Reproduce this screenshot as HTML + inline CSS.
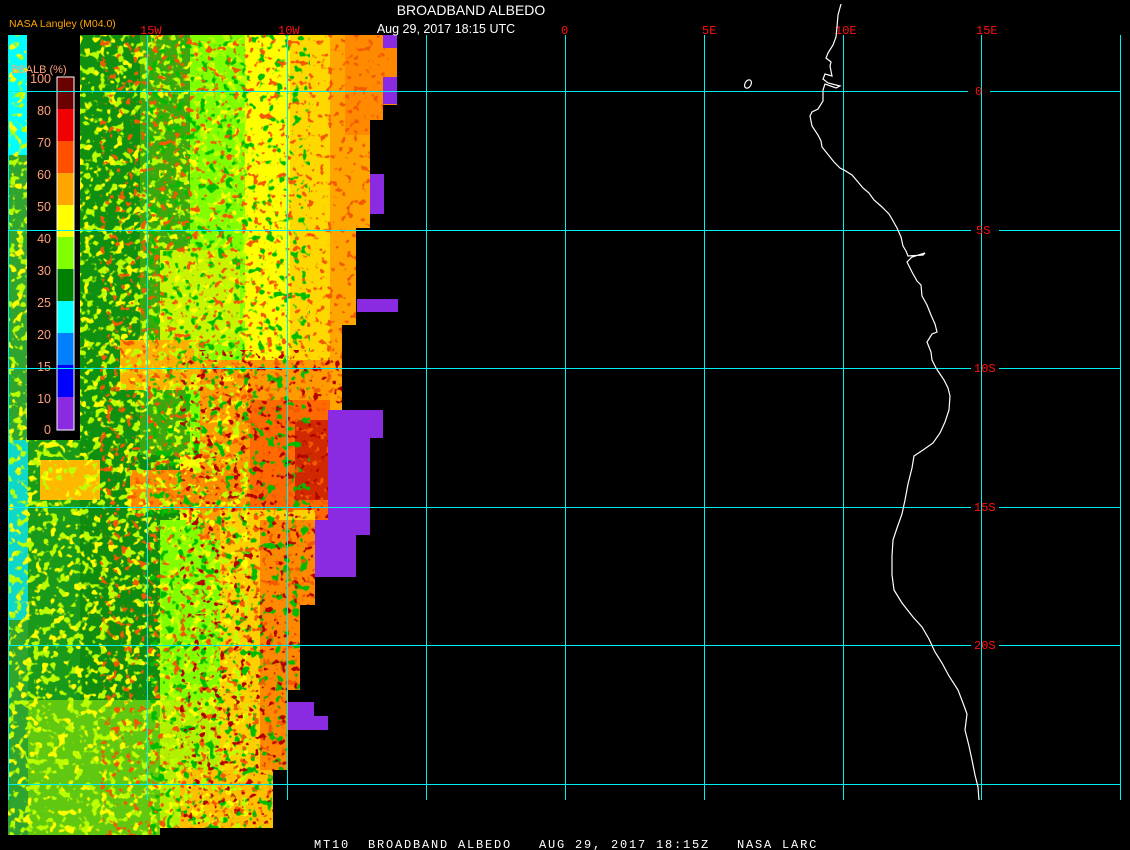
<!DOCTYPE html>
<html><head><meta charset="utf-8"><style>
html,body{margin:0;padding:0;background:#000;}
body{width:1130px;height:850px;overflow:hidden;position:relative;}
svg{position:absolute;left:0;top:0;}
</style></head><body>
<svg width="1130" height="850" viewBox="0 0 1130 850" xmlns="http://www.w3.org/2000/svg">
<defs>
<filter id="spY" x="0" y="0" width="100%" height="100%">
<feTurbulence type="fractalNoise" baseFrequency="0.12" numOctaves="2" seed="2"/>
<feColorMatrix values="0 0 0 0 1  0 0 0 0 1  0 0 0 0 0  12 0 0 0 -7.2"/>
</filter>
<filter id="spL" x="0" y="0" width="100%" height="100%">
<feTurbulence type="fractalNoise" baseFrequency="0.12" numOctaves="2" seed="5"/>
<feColorMatrix values="0 0 0 0 0.5  0 0 0 0 1  0 0 0 0 0  12 0 0 0 -7.0"/>
</filter>
<filter id="spR" x="0" y="0" width="100%" height="100%">
<feTurbulence type="fractalNoise" baseFrequency="0.15" numOctaves="2" seed="8"/>
<feColorMatrix values="0 0 0 0 0.9  0 0 0 0 0.1  0 0 0 0 0  12 0 0 0 -7.4"/>
</filter>
<filter id="spD" x="0" y="0" width="100%" height="100%">
<feTurbulence type="fractalNoise" baseFrequency="0.15" numOctaves="2" seed="11"/>
<feColorMatrix values="0 0 0 0 0.45  0 0 0 0 0  0 0 0 0 0  12 0 0 0 -7.6"/>
</filter>
<filter id="spG" x="0" y="0" width="100%" height="100%">
<feTurbulence type="fractalNoise" baseFrequency="0.12" numOctaves="2" seed="14"/>
<feColorMatrix values="0 0 0 0 0  0 0 0 0 0.5  0 0 0 0 0  12 0 0 0 -7.2"/>
</filter>
<clipPath id="img">
<polygon points="8,35 397,35 397,105 383,105 383,120 370,120 370,228 356,228 356,325 342,325 342,410 328,410 328,520 315,520 315,605 300,605 300,690 287,690 287,770 273,770 273,828 160,828 160,835 8,835"/>
</clipPath>
</defs>
<g clip-path="url(#img)">
<rect x="8" y="35" width="400" height="800" fill="#ffff00"/>
<rect x="8" y="35" width="20" height="800" fill="#2fa52f"/>
<rect x="8" y="35" width="20" height="120" fill="#00ffff"/>
<rect x="8" y="440" width="45" height="180" fill="#10d8c8"/>
<rect x="28" y="440" width="60" height="260" fill="#1a9a1a"/>
<rect x="80" y="35" width="110" height="420" fill="#109010"/>
<rect x="140" y="35" width="50" height="420" fill="#3aa80e"/>
<rect x="80" y="455" width="100" height="250" fill="#108c10"/>
<rect x="28" y="700" width="132" height="140" fill="#60c810"/>
<rect x="190" y="35" width="55" height="420" fill="#80ff00"/>
<rect x="160" y="520" width="80" height="200" fill="#80ff00"/>
<rect x="160" y="700" width="70" height="140" fill="#b0f000"/>
<rect x="245" y="35" width="45" height="400" fill="#ffff00"/>
<rect x="290" y="35" width="45" height="400" fill="#ffd800"/>
<rect x="330" y="35" width="70" height="420" fill="#ffa500"/>
<rect x="345" y="35" width="55" height="100" fill="#ff8a00"/>
<rect x="200" y="360" width="130" height="180" fill="#ff9a00"/>
<rect x="250" y="400" width="80" height="120" fill="#ff6a00"/>
<rect x="295" y="420" width="33" height="80" fill="#d02800"/>
<rect x="130" y="470" width="110" height="40" fill="#ff8a00"/>
<rect x="220" y="510" width="95" height="260" fill="#ffd000"/>
<rect x="260" y="520" width="55" height="250" fill="#ff8a00"/>
<rect x="180" y="770" width="100" height="70" fill="#ffc000"/>
<rect x="120" y="340" width="80" height="50" fill="#ffb000"/>
<rect x="40" y="460" width="60" height="40" fill="#ffb800"/>
<rect x="160" y="250" width="80" height="90" fill="#c8f400"/>
<rect x="8" y="35" width="240" height="800" filter="url(#spY)"/>
<rect x="8" y="35" width="240" height="800" filter="url(#spL)"/>
<rect x="150" y="35" width="160" height="800" filter="url(#spG)"/>
<rect x="100" y="35" width="300" height="800" filter="url(#spR)"/>
<rect x="180" y="350" width="220" height="480" filter="url(#spD)"/>
</g>
<g fill="#8a2be2">
<rect x="383" y="35" width="14" height="13"/>
<rect x="383" y="77" width="14" height="27"/>
<rect x="370" y="174" width="14" height="40"/>
<rect x="357" y="299" width="41" height="13"/>
<rect x="328" y="410" width="55" height="28"/>
<rect x="328" y="438" width="42" height="97"/>
<rect x="315" y="520" width="41" height="57"/>
<rect x="287" y="702" width="27" height="28"/>
<rect x="287" y="716" width="41" height="14"/>
</g>
<rect x="27" y="35" width="53" height="405" fill="#000"/>
<rect x="57" y="77" width="17" height="32" fill="#6b0000"/>
<rect x="57" y="109" width="17" height="32" fill="#f00000"/>
<rect x="57" y="141" width="17" height="32" fill="#ff5000"/>
<rect x="57" y="173" width="17" height="32" fill="#ffa500"/>
<rect x="57" y="205" width="17" height="32" fill="#ffff00"/>
<rect x="57" y="237" width="17" height="32" fill="#80ff00"/>
<rect x="57" y="269" width="17" height="32" fill="#008000"/>
<rect x="57" y="301" width="17" height="32" fill="#00ffff"/>
<rect x="57" y="333" width="17" height="32" fill="#0080ff"/>
<rect x="57" y="365" width="17" height="32" fill="#0000ff"/>
<rect x="57" y="397" width="17" height="33" fill="#8a2be2"/>
<rect x="57" y="77" width="17" height="353" fill="none" stroke="#fff" stroke-width="1"/>
<g font-family="Liberation Sans, sans-serif" font-size="12.5" fill="#ffa07a" text-anchor="end">
<text x="51" y="83">100</text><text x="51" y="115">80</text><text x="51" y="147">70</text><text x="51" y="179">60</text><text x="51" y="211">50</text><text x="51" y="243">40</text><text x="51" y="275">30</text><text x="51" y="307">25</text><text x="51" y="339">20</text><text x="51" y="371">15</text><text x="51" y="403">10</text><text x="51" y="434">0</text>
</g>
<text x="11" y="73" font-family="Liberation Sans, sans-serif" font-size="11" fill="#ffa07a">BBALB (%)</text>
<text x="9" y="27" font-family="Liberation Sans, sans-serif" font-size="10.5" fill="#ffa500">NASA Langley (M04.0)</text>
<g stroke="#00f0f0" stroke-width="1" fill="none">
<line x1="8.5" y1="35" x2="8.5" y2="800"/>
<line x1="147.5" y1="35" x2="147.5" y2="800"/>
<line x1="287.5" y1="35" x2="287.5" y2="800"/>
<line x1="426.5" y1="35" x2="426.5" y2="800"/>
<line x1="565.5" y1="35" x2="565.5" y2="800"/>
<line x1="704.5" y1="35" x2="704.5" y2="800"/>
<line x1="843.5" y1="35" x2="843.5" y2="800"/>
<line x1="981.5" y1="35" x2="981.5" y2="800"/>
<line x1="1120.5" y1="35" x2="1120.5" y2="800"/>
<line x1="8" y1="91.5" x2="968" y2="91.5"/><line x1="990" y1="91.5" x2="1121" y2="91.5"/>
<line x1="8" y1="230.5" x2="971" y2="230.5"/><line x1="999" y1="230.5" x2="1121" y2="230.5"/>
<line x1="8" y1="368.5" x2="971" y2="368.5"/><line x1="999" y1="368.5" x2="1121" y2="368.5"/>
<line x1="8" y1="507.5" x2="971" y2="507.5"/><line x1="999" y1="507.5" x2="1121" y2="507.5"/>
<line x1="8" y1="645.5" x2="971" y2="645.5"/><line x1="999" y1="645.5" x2="1121" y2="645.5"/>
<line x1="8" y1="784.5" x2="1121" y2="784.5"/>
</g>
<g font-family="Liberation Mono, monospace" font-size="12" fill="#ff1010">
<text x="140" y="34">15W</text><text x="278" y="34">10W</text><text x="561" y="34">0</text><text x="702" y="34">5E</text><text x="835" y="34">10E</text><text x="976" y="34">15E</text>
<text x="975" y="95">0</text><text x="976" y="234">5S</text><text x="974" y="372">10S</text><text x="974" y="511">15S</text><text x="974" y="649">20S</text>
</g>
<g stroke="#fff" stroke-width="1.2" fill="none">
<polyline points="841,4 838,15 837,27 836,37 833,45 828,53 826,58 831,62 830,66 832,76 825,74 823,79 828,83 840,86 836,88 825,84 823,90 823,101 818,109 812,112 810,116 812,126 818,135 821,141 822,147 830,157 834,162 840,168 844,170 852,175 858,182 863,188 869,193 874,200 882,207 889,214 892,219 897,228 901,237 903,246 906,251 908,256 923,255 925,253 912,257 907,262 912,272 917,281 921,285 922,296 927,305 931,315 935,324 937,332 932,334 927,342 931,352 932,360 936,368 940,374 944,380 948,388 950,396 949,410 945,422 940,433 933,443 923,450 914,456 912,468 908,484 905,500 902,514 897,528 893,540 892,556 892,575 894,590 902,603 913,617 922,627 929,639 935,652 942,663 949,676 958,690 963,703 967,714 965,730 969,746 972,760 975,775 978,787 979,800"/>
<ellipse cx="748" cy="84" rx="3" ry="4.5" transform="rotate(30 748 84)"/>
</g>
<text x="471" y="15" text-anchor="middle" font-family="Liberation Sans, sans-serif" font-size="14" fill="#fff">BROADBAND ALBEDO</text>
<text x="446" y="33" text-anchor="middle" font-family="Liberation Sans, sans-serif" font-size="12.5" fill="#fff">Aug 29, 2017 18:15 UTC</text>
<text x="314" y="848" font-family="Liberation Mono, monospace" font-size="12" letter-spacing="1.8" fill="#fff" xml:space="preserve">MT10  BROADBAND ALBEDO   AUG 29, 2017 18:15Z   NASA LARC</text>
</svg>
</body></html>
